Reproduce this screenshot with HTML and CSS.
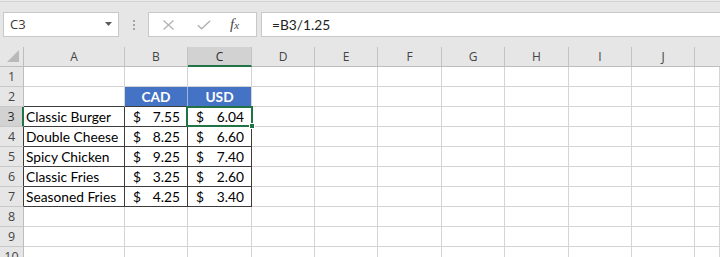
FILE: index.html
```html
<!DOCTYPE html>
<html>
<head>
<meta charset="utf-8">
<link rel="stylesheet" href="styles.css">
</head>
<body>
<div class="app">
  <div class="toolbar">
    <div class="namebox">
      <span class="nb-text">C3</span>
      <svg class="nb-arrow" width="7" height="4" viewBox="0 0 7 4"><polygon points="0,0 7,0 3.5,4" fill="#5a5a5a"/></svg>
    </div>
    <div class="sep"><i></i><i></i><i></i></div>
    <div class="fxbox">
      <svg class="ic-x" width="11" height="10" viewBox="0 0 11 10"><path d="M0.5 0.5 L10.5 9.5 M10.5 0.5 L0.5 9.5" stroke="#b3b3b3" stroke-width="1.3" fill="none"/></svg>
      <svg class="ic-check" width="14" height="10" viewBox="0 0 14 10"><path d="M0.8 5.2 L4.6 8.8 L13.2 0.8" stroke="#b3b3b3" stroke-width="1.5" fill="none"/></svg>
      <span class="ic-fx"><span class="f">f</span><span class="x">x</span></span>
    </div>
    <div class="formula">=B3/1.25</div>
  </div>
  <div class="sheet">
    <div class="corner"><svg width="13" height="13" viewBox="0 0 13 13"><polygon points="0,12 12,12 12,0" fill="#b9b9b9"/></svg></div>
    <div class="ch">A</div><div class="ch">B</div><div class="ch sel">C</div><div class="ch">D</div><div class="ch">E</div><div class="ch">F</div><div class="ch">G</div><div class="ch">H</div><div class="ch">I</div><div class="ch">J</div><div class="ch last"></div>

    <div class="rh">1</div><div class="c"></div><div class="c"></div><div class="c"></div><div class="c"></div><div class="c"></div><div class="c"></div><div class="c"></div><div class="c"></div><div class="c"></div><div class="c"></div><div class="c"></div>

    <div class="rh">2</div><div class="c tb"></div><div class="c hd hd-b">CAD</div><div class="c hd">USD</div><div class="c"></div><div class="c"></div><div class="c"></div><div class="c"></div><div class="c"></div><div class="c"></div><div class="c"></div><div class="c"></div>

    <div class="rh sel">3</div><div class="c t txt">Classic Burger</div><div class="c t acc"><span>$</span><span>7.55</span></div><div class="c t acc"><span>$</span><span>6.04</span></div><div class="c"></div><div class="c"></div><div class="c"></div><div class="c"></div><div class="c"></div><div class="c"></div><div class="c"></div><div class="c"></div>

    <div class="rh tr">4</div><div class="c t txt">Double Cheese</div><div class="c t acc"><span>$</span><span>8.25</span></div><div class="c t acc"><span>$</span><span>6.60</span></div><div class="c"></div><div class="c"></div><div class="c"></div><div class="c"></div><div class="c"></div><div class="c"></div><div class="c"></div><div class="c"></div>

    <div class="rh tr">5</div><div class="c t txt">Spicy Chicken</div><div class="c t acc"><span>$</span><span>9.25</span></div><div class="c t acc"><span>$</span><span>7.40</span></div><div class="c"></div><div class="c"></div><div class="c"></div><div class="c"></div><div class="c"></div><div class="c"></div><div class="c"></div><div class="c"></div>

    <div class="rh tr">6</div><div class="c t txt">Classic Fries</div><div class="c t acc"><span>$</span><span>3.25</span></div><div class="c t acc"><span>$</span><span>2.60</span></div><div class="c"></div><div class="c"></div><div class="c"></div><div class="c"></div><div class="c"></div><div class="c"></div><div class="c"></div><div class="c"></div>

    <div class="rh tr">7</div><div class="c t txt">Seasoned Fries</div><div class="c t acc"><span>$</span><span>4.25</span></div><div class="c t acc"><span>$</span><span>3.40</span></div><div class="c"></div><div class="c"></div><div class="c"></div><div class="c"></div><div class="c"></div><div class="c"></div><div class="c"></div><div class="c"></div>

    <div class="rh">8</div><div class="c"></div><div class="c"></div><div class="c"></div><div class="c"></div><div class="c"></div><div class="c"></div><div class="c"></div><div class="c"></div><div class="c"></div><div class="c"></div><div class="c"></div>

    <div class="rh">9</div><div class="c"></div><div class="c"></div><div class="c"></div><div class="c"></div><div class="c"></div><div class="c"></div><div class="c"></div><div class="c"></div><div class="c"></div><div class="c"></div><div class="c"></div>

    <div class="rh">10</div><div class="c"></div><div class="c"></div><div class="c"></div><div class="c"></div><div class="c"></div><div class="c"></div><div class="c"></div><div class="c"></div><div class="c"></div><div class="c"></div><div class="c"></div>

    <div class="selbox"><div class="handle"></div></div>
  </div>
</div>
</body>
</html>
```

FILE: styles.css
```css
html, body {
  margin: 0;
  padding: 0;
  background: #ffffff;
}

.app {
  width: 720px;
  height: 257px;
  overflow: hidden;
  font-family: "Open Sans", "Noto Sans", sans-serif;
}

.toolbar {
  height: 47px;
  box-sizing: border-box;
  padding-top: 12px;
  display: flex;
  align-items: flex-start;
  background: linear-gradient(#ececec 0 1px, #d3d3d3 1px 2px, #e6e6e6 2px);
}

.namebox {
  margin-left: 3px;
  width: 116px;
  height: 25px;
  box-sizing: border-box;
  border: 1px solid #c8c8c8;
  background: #ffffff;
  display: flex;
  align-items: center;
  justify-content: space-between;
  padding: 0 6px 0 6px;
}

.nb-text {
  font-size: 13px;
  color: #3a3a3a;
  line-height: 23px;
}

.nb-arrow {
  display: block;
  margin-top: -2px;
}

.sep {
  width: 29px;
  height: 25px;
  display: flex;
  flex-direction: column;
  align-items: center;
  justify-content: center;
  gap: 2px;
}

.sep i {
  display: block;
  width: 2px;
  height: 2px;
  background: #a6a6a6;
}

.fxbox {
  width: 109px;
  height: 25px;
  box-sizing: border-box;
  border: 1px solid #c8c8c8;
  background: #ffffff;
  display: flex;
  align-items: center;
  padding-left: 14px;
}

.ic-x {
  display: block;
}

.ic-check {
  display: block;
  margin-left: 23px;
}

.ic-fx {
  margin-left: 19px;
  font-family: "Liberation Serif", "DejaVu Serif", serif;
  font-style: italic;
  color: #474747;
  line-height: 1;
  display: flex;
  align-items: baseline;
}

.ic-fx .f {
  font-size: 15px;
}

.ic-fx .x {
  font-size: 11px;
}

.formula {
  margin-left: 4px;
  flex: 1;
  height: 25px;
  box-sizing: border-box;
  border: 1px solid #c8c8c8;
  border-right: none;
  background: #ffffff;
  padding-left: 10px;
  font-family: "Lato", "Open Sans", sans-serif;
  font-size: 13.75px;
  line-height: 23px;
  color: #222222;
}

.sheet {
  position: relative;
  display: grid;
  grid-template-columns: 24px 101px 63px 64px 63px 63px 64px 63px 64px 63px 63px 1fr;
  grid-auto-rows: 20px;
  background: #ffffff;
}

.sheet > div {
  box-sizing: border-box;
}

.corner {
  background: #e6e6e6;
  border-right: 1px solid #bdbdbd;
  border-bottom: 1px solid #bdbdbd;
  display: flex;
  align-items: flex-end;
  justify-content: flex-end;
  padding: 0 3px 3px 0;
}

.corner svg {
  display: block;
}

.ch {
  background: #e6e6e6;
  border-right: 1px solid #c3c3c3;
  border-bottom: 1px solid #bdbdbd;
  text-align: center;
  font-size: 12px;
  line-height: 19px;
  color: #444444;
}

.ch.sel {
  background: #d2d2d2;
  border-bottom: 2px solid #217346;
  color: #2b2b2b;
}

.ch.last {
  border-right: none;
}

.rh {
  background: #e6e6e6;
  border-right: 1px solid #bdbdbd;
  border-bottom: 1px solid #c8c8c8;
  text-align: center;
  font-size: 12.5px;
  line-height: 19px;
  color: #444444;
}

.rh.sel {
  background: #d2d2d2;
  border-right: 2px solid #217346;
  color: #2b2b2b;
}

.rh.tr {
  border-right-color: #3c3c3c;
}

.c {
  border-right: 1px solid #d4d4d4;
  border-bottom: 1px solid #d4d4d4;
  font-family: "Lato", "Open Sans", sans-serif;
  font-size: 13.75px;
  line-height: 19px;
  color: #000000;
  white-space: nowrap;
  overflow: hidden;
}

.c.tb {
  border-bottom-color: #3c3c3c;
}

.c.t {
  border-right-color: #3c3c3c;
  border-bottom-color: #3c3c3c;
}

.c.txt {
  padding-left: 2px;
}

.c.acc {
  display: flex;
  justify-content: space-between;
  padding: 0 7px 0 8px;
}

.c.hd {
  background: #4472c4;
  color: #ffffff;
  font-weight: bold;
  text-align: center;
  border-bottom-color: #3c3c3c;
}

.c.hd-b {
  border-right-color: #9fb4de;
}

.selbox {
  position: absolute;
  left: 186px;
  top: 59px;
  width: 67px;
  height: 21px;
  border: 2px solid #217346;
  box-sizing: border-box;
}

.handle {
  position: absolute;
  right: -4px;
  bottom: -4px;
  width: 6px;
  height: 6px;
  background: #217346;
  border: 1px solid #ffffff;
  box-sizing: border-box;
}
```
